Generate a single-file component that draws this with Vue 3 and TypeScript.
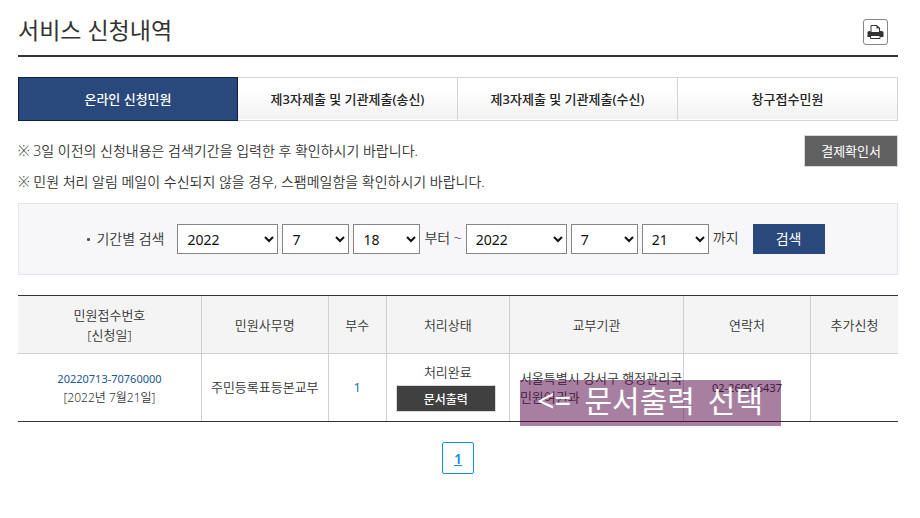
<script setup lang="ts">
import { reactive, ref } from 'vue'

interface DateParts {
  year: number
  month: number
  day: number
}

interface Application {
  id: string
  date: string
  name: string
  copies: number
  status: string
  agency: string[]
  phone: string
}

const tabs = ['온라인 신청민원', '제3자제출 및 기관제출(송신)', '제3자제출 및 기관제출(수신)', '창구접수민원']
const activeTab = ref(0)

const from = reactive<DateParts>({ year: 2022, month: 7, day: 18 })
const to = reactive<DateParts>({ year: 2022, month: 7, day: 21 })
const years = [2020, 2021, 2022]

const applications: Application[] = [
  {
    id: '20220713-70760000',
    date: '[2022년 7월21일]',
    name: '주민등록표등본교부',
    copies: 1,
    status: '처리완료',
    agency: ['서울특별시 강서구 행정관리국', '민원여권과'],
    phone: '02-2600-6437',
  },
]
</script>

<template>
  <main class="page">
    <header class="page-head">
      <h1>서비스 신청내역</h1>
      <button class="print" type="button" aria-label="인쇄">
        <svg width="17" height="16" viewBox="0 0 17 16" aria-hidden="true">
          <path d="M4 8V1.5h6L12.5 4v4" fill="#fff" stroke="#333" />
          <path d="M9.5 1v3.5H13z" fill="#333" />
          <path d="M.5 8 2 7h1.5v1h9.5V7h2l1.5 1v5H.5z" fill="#333" />
          <path d="M3.5 11.5h9.5v3H3.5z" fill="#fff" stroke="#333" />
        </svg>
      </button>
    </header>

    <nav class="tabs">
      <a
        v-for="(tab, i) in tabs"
        :key="tab"
        href="#"
        :class="{ active: i === activeTab }"
        @click.prevent="activeTab = i"
      >{{ tab }}</a>
    </nav>

    <section class="notice">
      <div>
        <p>※ 3일 이전의 신청내용은 검색기간을 입력한 후 확인하시기 바랍니다.</p>
        <p>※ 민원 처리 알림 메일이 수신되지 않을 경우, 스팸메일함을 확인하시기 바랍니다.</p>
      </div>
      <button class="receipt" type="button">결제확인서</button>
    </section>

    <form class="search" @submit.prevent>
      <label class="period" for="from-year">기간별 검색</label>
      <div class="date">
        <select id="from-year" v-model="from.year" class="year">
          <option v-for="y in years" :key="y" :value="y">{{ y }}</option>
        </select>
        <select v-model="from.month" aria-label="시작 월">
          <option v-for="m in 12" :key="m" :value="m">{{ m }}</option>
        </select>
        <select v-model="from.day" aria-label="시작 일">
          <option v-for="d in 31" :key="d" :value="d">{{ d }}</option>
        </select>
      </div>
      <span class="joint">부터 ~</span>
      <div class="date">
        <select v-model="to.year" class="year" aria-label="종료 연도">
          <option v-for="y in years" :key="y" :value="y">{{ y }}</option>
        </select>
        <select v-model="to.month" aria-label="종료 월">
          <option v-for="m in 12" :key="m" :value="m">{{ m }}</option>
        </select>
        <select v-model="to.day" aria-label="종료 일">
          <option v-for="d in 31" :key="d" :value="d">{{ d }}</option>
        </select>
      </div>
      <span class="joint">까지</span>
      <button class="submit" type="submit">검색</button>
    </form>

    <div class="results">
      <table>
        <colgroup>
          <col class="c-id" />
          <col class="c-name" />
          <col class="c-copies" />
          <col class="c-status" />
          <col class="c-agency" />
          <col class="c-phone" />
          <col class="c-extra" />
        </colgroup>
        <thead>
          <tr>
            <th scope="col">민원접수번호<br />[신청일]</th>
            <th scope="col">민원사무명</th>
            <th scope="col">부수</th>
            <th scope="col">처리상태</th>
            <th scope="col">교부기관</th>
            <th scope="col">연락처</th>
            <th scope="col">추가신청</th>
          </tr>
        </thead>
        <tbody>
          <tr v-for="item in applications" :key="item.id">
            <td>
              <a class="number" href="#">{{ item.id }}</a>
              <span class="issued">{{ item.date }}</span>
            </td>
            <td>{{ item.name }}</td>
            <td><span class="copies">{{ item.copies }}</span></td>
            <td class="status">
              <span>{{ item.status }}</span>
              <button type="button">문서출력</button>
            </td>
            <td class="agency">
              <span v-for="line in item.agency" :key="line">{{ line }}</span>
            </td>
            <td class="phone">{{ item.phone }}</td>
            <td></td>
          </tr>
        </tbody>
      </table>
      <div class="callout">
        <span>&lt;=</span>
        <span>문서출력</span>
        <span>선택</span>
      </div>
    </div>

    <nav class="pager" aria-label="페이지">
      <a href="#" aria-current="page">1</a>
    </nav>
  </main>
</template>

<style>
body {
  background: #fff;
}
</style>

<style scoped>
.page {
  padding: 0 22px 0 18px;
  color: #333;
  font-family: "Noto Sans", "Noto Sans CJK KR", sans-serif;
  font-size: 13px;
  font-weight: 350;
  line-height: 20px;
}

.page *,
.page {
  box-sizing: border-box;
}

button,
select {
  font-family: inherit;
  margin: 0;
}

.page-head {
  display: flex;
  justify-content: space-between;
  height: 57px;
  padding: 13px 10px 0 0;
  border-bottom: 2px solid #333;
}

h1 {
  margin: 0;
  font-size: 23px;
  font-weight: 400;
  line-height: 34px;
}

.print {
  display: flex;
  align-items: center;
  justify-content: center;
  width: 25px;
  height: 26px;
  margin-top: 6px;
  padding: 0;
  border: 1px solid #858585;
  border-radius: 3px;
  background: #fff;
}

.tabs {
  display: grid;
  grid-template-columns: repeat(4, 1fr);
  margin-top: 20px;
}

.tabs a {
  height: 44px;
  border: 1px solid #d5d5d5;
  border-left: 0;
  background: linear-gradient(#fff 30%, #f1f1f1);
  box-shadow: inset 0 -1px #fff;
  color: #222;
  font-weight: 500;
  line-height: 42px;
  text-align: center;
  text-decoration: none;
}

.tabs .active {
  border: 1px solid #0c2340;
  background: #29497d;
  box-shadow: none;
  color: #fff;
}

.notice {
  display: flex;
  align-items: flex-start;
  justify-content: space-between;
  padding-top: 14px;
}

.notice p {
  margin: 0;
  font-size: 14px;
  line-height: 31px;
}

.receipt {
  height: 32px;
  padding: 0 16px;
  border: 1px solid #d8d8d8;
  background: #606060;
  color: #fff;
  font-size: 13px;
  line-height: 28px;
}

.search {
  display: flex;
  align-items: center;
  justify-content: center;
  margin-top: 6px;
  padding: 20px 4px 20px 0;
  border: 1px solid #e5e5ed;
  background: #f7f7fa;
  font-size: 14px;
}

.period {
  display: flex;
  align-items: center;
  gap: 6px;
  margin-right: 13px;
}

.period::before {
  width: 3px;
  height: 3px;
  border-radius: 1px;
  background: #555;
  content: "";
}

.date {
  display: flex;
  gap: 4px;
}

select {
  width: 67px;
  height: 30px;
  padding: 0 0 0 5px;
  border: 1px solid #858585;
  border-radius: 0;
  background: #fff;
  color: #111;
  font-size: 14px;
}

select.year {
  width: 101px;
}

.joint {
  margin: 0 4px;
  padding-bottom: 2px;
}

.submit {
  width: 72px;
  height: 30px;
  margin-left: 10px;
  padding: 0 0 2px;
  border: 0;
  background: #29497d;
  color: #fff;
  font-size: 14px;
}

.results {
  position: relative;
  margin-top: 20px;
}

table {
  width: 100%;
  border-top: 1px solid #333;
  border-bottom: 1px solid #333;
  border-spacing: 0;
  table-layout: fixed;
}

.c-id {
  width: 20.9%;
}

.c-name,
.c-phone {
  width: 14.4%;
}

.c-copies {
  width: 6.6%;
}

.c-status {
  width: 14%;
}

.c-agency {
  width: 19.8%;
}

.c-extra {
  width: 9.9%;
}

th {
  height: 58px;
  padding: 0;
  border-right: 1px solid #d0d0d0;
  border-bottom: 1px solid #d0d0d0;
  background: #f4f4f4;
  font-weight: inherit;
}

td {
  height: 67px;
  padding: 0;
  border-right: 1px solid #d0d0d0;
  line-height: 19px;
  text-align: center;
}

th:last-child,
td:last-child {
  border-right: 0;
}

.number {
  display: block;
  color: #24568f;
  font-size: 11px;
  font-weight: 400;
  text-decoration: none;
}

.issued {
  display: block;
  font-size: 12px;
}

.copies {
  color: #2674ad;
  font-weight: 400;
}

.status span {
  display: block;
}

.status button {
  display: block;
  width: calc(100% - 22px);
  height: 27px;
  margin: 3px 0 0 9px;
  padding: 0;
  border: 1px solid #d8d8d8;
  background: #404040;
  color: #fff;
  font-size: 12px;
  font-weight: 500;
}

.agency {
  padding-left: 10px;
  text-align: left;
}

.agency span {
  display: block;
  white-space: nowrap;
}

.phone {
  font-size: 11px;
  font-weight: 400;
}

.callout {
  display: flex;
  justify-content: center;
  gap: 13px;
  position: absolute;
  top: 85px;
  left: 57%;
  width: 261px;
  height: 46px;
  background: rgba(79, 0, 65, 0.5);
  color: #fff;
  font-size: 30px;
  font-weight: 400;
  line-height: 42px;
  white-space: nowrap;
}

.pager {
  display: flex;
  justify-content: center;
  margin-top: 20px;
}

.pager a {
  width: 32px;
  height: 32px;
  border: 1px solid #0a93e2;
  border-radius: 2px;
  color: #0a93e2;
  font-size: 14px;
  font-weight: 600;
  line-height: 32px;
  text-align: center;
}
</style>
